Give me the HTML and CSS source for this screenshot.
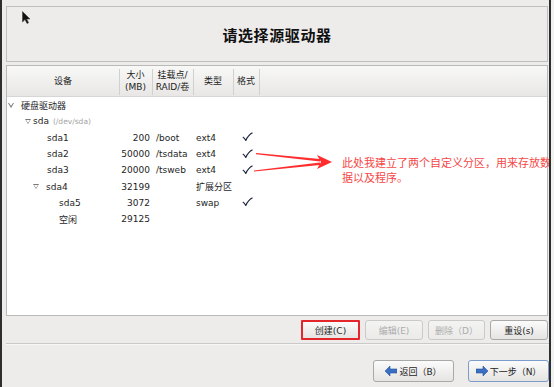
FILE: index.html
```html
<!DOCTYPE html>
<html lang="zh">
<head>
    <meta charset="UTF-8">
    <meta name="viewport" content="width=device-width, initial-scale=1.0">
    <title>请选择源驱动器</title>
    <link rel="stylesheet" href="styles.css">
</head>
<body>
    <div class="window">
        <div class="title-box">
            <h1>请选择源驱动器</h1>
        </div>

        <div class="table-box">
            <div class="thead">
                <div class="th">设备</div>
                <div class="th">大小<br>(MB)</div>
                <div class="th">挂载点/<br>RAID/卷</div>
                <div class="th">类型</div>
                <div class="th">格式</div>
                <div class="th"></div>
            </div>
            <div class="tbody">
                <div class="row">
                    <div class="name lv0"><span class="twisty"></span>硬盘驱动器</div>
                </div>
                <div class="row">
                    <div class="name lv1"><span class="twisty"></span>sda <span class="path">(/dev/sda)</span></div>
                </div>
                <div class="row">
                    <div class="name lv2">sda1</div>
                    <div class="size">200</div>
                    <div class="mount">/boot</div>
                    <div class="type">ext4</div>
                    <div class="fmt"><svg class="check" width="11" height="9" viewBox="0 0 11 9"><path d="M0.8 5 C2 5.6 3 6.8 3.8 8.4 C5.4 4.8 7.8 2.2 10.5 0.8"/></svg></div>
                </div>
                <div class="row">
                    <div class="name lv2">sda2</div>
                    <div class="size">50000</div>
                    <div class="mount">/tsdata</div>
                    <div class="type">ext4</div>
                    <div class="fmt"><svg class="check" width="11" height="9" viewBox="0 0 11 9"><path d="M0.8 5 C2 5.6 3 6.8 3.8 8.4 C5.4 4.8 7.8 2.2 10.5 0.8"/></svg></div>
                </div>
                <div class="row">
                    <div class="name lv2">sda3</div>
                    <div class="size">20000</div>
                    <div class="mount">/tsweb</div>
                    <div class="type">ext4</div>
                    <div class="fmt"><svg class="check" width="11" height="9" viewBox="0 0 11 9"><path d="M0.8 5 C2 5.6 3 6.8 3.8 8.4 C5.4 4.8 7.8 2.2 10.5 0.8"/></svg></div>
                </div>
                <div class="row">
                    <div class="name lv2b"><span class="twisty"></span>sda4</div>
                    <div class="size">32199</div>
                    <div class="mount"></div>
                    <div class="type">扩展分区</div>
                    <div class="fmt"></div>
                </div>
                <div class="row">
                    <div class="name lv3">sda5</div>
                    <div class="size">3072</div>
                    <div class="mount"></div>
                    <div class="type">swap</div>
                    <div class="fmt"><svg class="check" width="11" height="9" viewBox="0 0 11 9"><path d="M0.8 5 C2 5.6 3 6.8 3.8 8.4 C5.4 4.8 7.8 2.2 10.5 0.8"/></svg></div>
                </div>
                <div class="row">
                    <div class="name lv3">空闲</div>
                    <div class="size">29125</div>
                </div>
            </div>
        </div>

        <div class="actions">
            <button class="btn btn-create">创建(C)</button>
            <button class="btn btn-edit" disabled>编辑(E)</button>
            <button class="btn btn-del" disabled>删除（D）</button>
            <button class="btn btn-reset">重设(s)</button>
        </div>

        <div class="sep"></div>

        <div class="nav">
            <button class="btn btn-nav">
                <svg class="nav-icon" width="12" height="10" viewBox="0 0 12 10"><polygon points="0,5 5,0 5,3 12,3 12,7 5,7 5,10" fill="#3b6fc3" stroke="#25539e" stroke-width="0.6"/></svg>返回（B）
            </button>
            <button class="btn btn-nav btn-next">
                <svg class="nav-icon" width="12" height="10" viewBox="0 0 12 10"><polygon points="12,5 7,0 7,3 0,3 0,7 7,7 7,10" fill="#3b6fc3" stroke="#25539e" stroke-width="0.6"/></svg>下一步（N）
            </button>
        </div>

        <!-- mouse pointer -->
        <svg class="cursor" width="9" height="13" viewBox="0 0 9 13">
            <path d="M0.5 0.5 L0.5 11 L3 8.6 L5 12.5 L6.6 11.7 L4.7 8 L8 8 Z" fill="#111" stroke="#444" stroke-width="0.6"/>
        </svg>

        <!-- annotation -->
        <svg class="note-arrow" width="85" height="26" viewBox="0 0 85 26">
            <polygon points="4,5 68,11 68,13.6 4,6.2" fill="#ff2d2d"/>
            <polygon points="2,22.6 68,14.4 68,17 2,23.6" fill="#ff2d2d"/>
            <polygon points="65,7 80,14 65,21 69,14" fill="#ff2d2d"/>
        </svg>
        <p class="note">此处我建立了两个自定义分区，用来存放数<br>据以及程序。</p>
    </div>
</body>
</html>
```

FILE: styles.css
```css
body {
    margin: 0;
    background-color: #f1f1f1;
    font-family: "DejaVu Sans", "Noto Sans CJK SC", sans-serif;
    font-size: 9px;
    color: #1e1e1e;
}
.window {
    position: relative;
    width: 547px;
    height: 387px;
    background-color: #edeceb;
    border-left: 2px solid #2e2e2e;
    border-right: 2px solid #2e2e2e;
    overflow: hidden;
}
.title-box {
    height: 54px;
    margin: 6px 1px 0 4px;
    border: 1px solid #bfbfbf;
    display: flex;
    align-items: center;
    justify-content: center;
}
.title-box h1 {
    margin: 0;
    font-size: 15px;
    font-weight: bold;
    letter-spacing: 0.6px;
    color: #111;
}
.table-box {
    height: 249px;
    margin: 3px 1px 0 4px;
    border: 1px solid #b9b9b9;
    background: white;
}
.thead,
.row {
    display: grid;
    grid-template-columns: 112px 33px 41px 40px 26px 1fr;
}
.thead {
    height: 30px;
    background: linear-gradient(#f8f8f7, #e8e7e5);
    border-bottom: 1px solid #d6d6d6;
}
.th {
    position: relative;
    display: flex;
    align-items: center;
    justify-content: center;
    text-align: center;
    line-height: 12px;
    white-space: nowrap;
}
.th + .th::before {
    content: "";
    position: absolute;
    left: 0;
    top: 3px;
    bottom: 1px;
    width: 1px;
    background: #d0d0d0;
}
.row {
    height: 16.3px;
    align-items: center;
    white-space: nowrap;
}
.name {
    display: flex;
    align-items: center;
}
.twisty {
    display: inline-block;
    width: 0;
    height: 0;
    margin-right: 7px;
    border-left: 3.5px solid transparent;
    border-right: 3.5px solid transparent;
    border-top: 5px solid #777;
    position: relative;
}
.twisty::after {
    content: "";
    position: absolute;
    left: -2px;
    top: -4.2px;
    border-left: 2px solid transparent;
    border-right: 2px solid transparent;
    border-top: 3px solid white;
}
.lv0 { padding-left: 1px; }
.lv1 { padding-left: 18px; }
.lv1 .twisty { margin-right: 2px; }
.lv2 { padding-left: 40px; }
.lv2b { padding-left: 26px; }
.lv3 { padding-left: 52px; }
.path {
    margin-left: 4px;
    font-size: 7.5px;
    color: #a3a3a3;
}
.size {
    text-align: right;
    padding-right: 2px;
}
.mount { padding-left: 4px; }
.type { padding-left: 3px; }
.fmt {
    padding-left: 9px;
    display: flex;
    align-items: center;
}
.check {
    margin-top: -2px;
}
.check path {
    fill: none;
    stroke: #202a44;
    stroke-width: 1.2;
}
.actions {
    display: flex;
    justify-content: flex-end;
    gap: 5px;
    margin: 4px 1px 0 0;
}
.btn {
    box-sizing: border-box;
    height: 20px;
    padding: 0;
    border: 1px solid #a9a9a9;
    border-radius: 3px;
    background: linear-gradient(#fbfbfb, #e5e4e2);
    font-family: inherit;
    font-size: 9px;
    color: #1e1e1e;
    display: flex;
    align-items: center;
    justify-content: center;
}
.btn-create {
    width: 59px;
    border: 2px solid #e3262b;
    border-radius: 1px;
}
.btn-edit { width: 58px; }
.btn-del { width: 57px; }
.btn-reset { width: 58px; }
.btn:disabled {
    color: #acacac;
    border-color: #cacaca;
    background: linear-gradient(#f3f3f2, #ebeae8);
}
.sep {
    margin: 3px 0 0 4px;
    border-top: 1px solid #c9c9c9;
    border-bottom: 1px solid #f7f7f7;
}
.nav {
    display: flex;
    justify-content: flex-end;
    gap: 14px;
    margin-top: 15px;
}
.btn-nav {
    width: 81px;
    height: 22px;
}
.btn-next {
    border-color: #7c9dcc;
}
.nav-icon {
    margin-right: 2px;
}
.cursor {
    position: absolute;
    left: 20px;
    top: 11px;
}
.note-arrow {
    position: absolute;
    left: 250px;
    top: 148px;
}
.note {
    position: absolute;
    left: 340px;
    top: 155px;
    margin: 0;
    font-family: "Noto Sans CJK SC", sans-serif;
    font-size: 11px;
    line-height: 15px;
    color: #f54848;
    white-space: nowrap;
}
```
